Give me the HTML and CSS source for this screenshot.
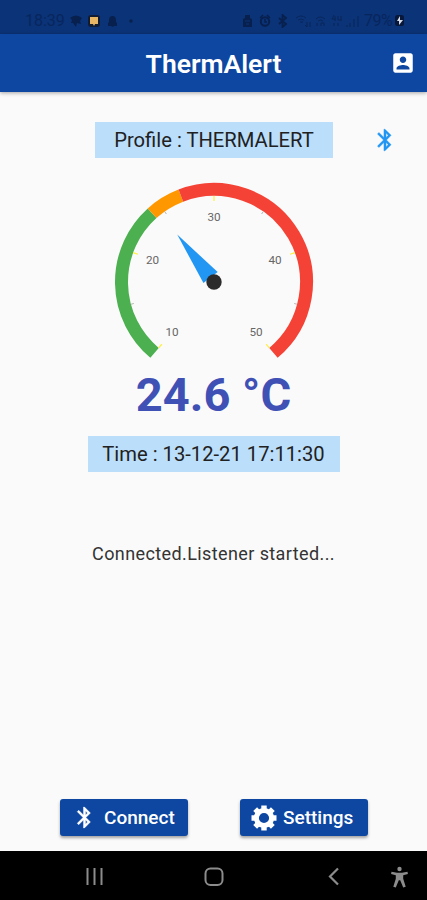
FILE: index.html
```
<!DOCTYPE html>
<html lang="en">
<head>
  <meta charset="UTF-8">
  <meta name="viewport" content="width=device-width, initial-scale=1.0">
  <title>ThermAlert</title>
  <link rel="stylesheet" href="styles.css">
</head>
<body>
  <div class="status-bar">
    <span class="clock">18:39</span>
    <svg class="status-left" width="66" height="14" viewBox="0 0 66 14">
      <path d="M1 4Q7-1 13 4L11 7 12 10 8 9 7 13 4 9 2 9 3 6Z" fill="#08204e"/>
      <rect x="19" y="1" width="12" height="12" rx="3" fill="#101c33"/>
      <path d="M21 3h8v7h-3l-1 2-1-2h-3z" fill="#e8b765"/>
      <path d="M39 12V9l1-1V6q0-4 3.500-4T47 6v2l1 1v3zM42 12h3l-1 1z" fill="#08204e"/>
      <circle cx="62" cy="7" r="1.700" fill="#08204e"/>
    </svg>
    <svg class="status-right" width="118" height="14" viewBox="0 0 118 14">
      <path d="M1 13V5l2-1V1h5v3l2 1v8z" fill="#08204e"/>
      <path d="M3 7h5M4 10h3" stroke="#0b3377"/>
      <circle cx="23" cy="7.500" r="4.200" fill="none" stroke="#08204e" stroke-width="2"/>
      <path d="M18 4l3-3M25 1l3 3M23 5v3h2" fill="none" stroke="#08204e" stroke-width="1.500"/>
      <path d="M37 4l7 6-3.500 3V1L44 4l-7 6" fill="none" stroke="#08204e" stroke-width="1.800"/>
      <path d="M54 4q5-4 10 0M56 6q3-2 6 0M58 8h3M65 8v5M63 11l2 2M68 13V8M74 5q4-4 9 0M76 7q3-2 5 0M75 12V9M79 12V9h3v3" fill="none" stroke="#08265d"/>
      <path d="M92 1l-2 4h4M93 2v5M96 2v4h4M99 2v5M92 12V9M96 9v3M105 13v-2M108 13v-4M112 13V5M116 13V2" fill="none" stroke="#08265d"/>
    </svg>
    <span class="battery-text">79%</span>
    <svg width="9" height="13" viewBox="0 0 9 13">
      <rect y="1" width="9" height="11" rx="2.500" fill="#07183a"/>
      <path d="M5 2L2 7h2v4l4-5H5z" fill="#d5dbe6"/>
    </svg>
  </div>

  <div class="app-bar">
    <h1>ThermAlert</h1>
    <svg class="account" width="26" height="26" viewBox="0 0 24 24">
      <path fill="#fff" d="M3 5v14c0 1.100.89 2 2 2h14c1.100 0 2-.9 2-2V5c0-1.100-.9-2-2-2H5c-1.110 0-2 .9-2 2zm12 4c0 1.660-1.340 3-3 3s-3-1.340-3-3 1.340-3 3-3 3 1.340 3 3zm-9 8c0-2 4-3.100 6-3.100s6 1.100 6 3.100v1H6v-1z"/>
    </svg>
  </div>

  <div class="content">
    <div class="profile-row">
      <div class="label profile">Profile : THERMALERT</div>
      <svg class="bt-status" width="26" height="26" viewBox="0 0 24 24">
        <path fill="#2196f3" stroke="#2196f3" stroke-width=".3" d="M17.710 7.710L12 2h-1v7.590L6.410 5 5 6.410 10.590 12 5 17.590 6.410 19 11 14.410V22h1l5.710-5.710-4.300-4.290 4.300-4.290zM13 5.830l1.880 1.880L13 9.590V5.830zm1.880 10.460L13 18.170v-3.760l1.880 1.880z"/>
      </svg>
    </div>

    <svg class="gauge" width="200" height="180" viewBox="-100 -100 200 180">
      <!-- ranges: 10-24, 24-27, 27-50 -->
      <g fill="none" stroke-width="13">
        <path d="M-59.460 70.860A92.500 92.500 0 0 1-61.890-68.740" stroke="#4caf50"/>
        <path d="M-61.890-68.740A92.500 92.500 0 0 1-33.150-86.360" stroke="#ff9800"/>
        <path d="M-33.150-86.360A92.500 92.500 0 0 1 59.460 70.860" stroke="#f44336"/>
      </g>
      <g stroke="#ffee3b" stroke-width="1.200">
        <path d="M0-86v5" transform="rotate(-140)"/>
        <path d="M0-86v5" transform="rotate(-70)"/>
        <path d="M0-86v5"/>
        <path d="M0-86v5" transform="rotate(70)"/>
        <path d="M0-86v5" transform="rotate(140)"/>
      </g>
      <g stroke="#aaa" stroke-width=".8">
        <path d="M0-86v3" transform="rotate(-105)"/>
        <path d="M0-86v3" transform="rotate(-35)"/>
        <path d="M0-86v3" transform="rotate(35)"/>
        <path d="M0-86v3" transform="rotate(105)"/>
      </g>
      <g class="ticks">
        <text x="-42" y="54">10</text>
        <text x="-61.500" y="-18.500">20</text>
        <text x="0" y="-61">30</text>
        <text x="61" y="-18.500">40</text>
        <text x="42" y="54">50</text>
      </g>
      <path d="M0-60L9-5.600H-9z" fill="#2196f3" transform="rotate(-37.800)"/>
      <circle r="7.700" fill="#2b2b2b"/>
    </svg>

    <div class="temperature">24.6 °C</div>
    <div class="label time">Time : 13-12-21 17:11:30</div>
    <div class="message">Connected.Listener started...</div>

    <div class="actions">
      <button class="connect">
        <svg width="25" height="25" viewBox="0 0 24 24">
          <path fill="#fff" stroke="#fff" stroke-width=".4" d="M17.710 7.710L12 2h-1v7.590L6.410 5 5 6.410 10.590 12 5 17.590 6.410 19 11 14.410V22h1l5.710-5.710-4.300-4.290 4.300-4.290zM13 5.830l1.880 1.880L13 9.590V5.830zm1.880 10.460L13 18.170v-3.760l1.880 1.880z"/>
        </svg>
        <span>Connect</span>
      </button>
      <button class="settings">
        <svg width="26" height="26" viewBox="-13 -13 26 26">
          <circle r="7.600" fill="none" stroke="#fff" stroke-width="5"/>
          <g stroke="#fff" stroke-width="5.400">
            <path d="M0-12.500V-8M0 12.500V8M-12.500 0H-8M12.500 0H8"/>
            <path d="M0-12.500V-8M0 12.500V8M-12.500 0H-8M12.500 0H8" transform="rotate(45)"/>
          </g>
        </svg>
        <span>Settings</span>
      </button>
    </div>
  </div>

  <div class="nav-bar">
    <svg width="427" height="49" viewBox="0 0 427 49" fill="none" stroke="#8c8c8c" stroke-width="2">
      <path d="M87.500 17v17M94.500 17v17M101.500 17v17"/>
      <rect x="205.500" y="17.500" width="17" height="16.500" rx="5"/>
      <path d="M338 17.500L330 25.500l8 8" stroke-width="2.200"/>
      <circle cx="399.500" cy="18" r="2.200" fill="#8c8c8c" stroke="none"/>
      <path fill="#8c8c8c" stroke="none" d="M391.500 20.800l5.500.9h5l5.500-.9.400 2.200-4.700 1.200v3.500l2.500 8-2.500.8-3-7.200h-1.400l-3 7.200-2.500-.8 2.500-8v-3.500l-4.700-1.200z"/>
    </svg>
  </div>
</body>
</html>
```
FILE: styles.css
```
* {
  box-sizing: border-box;
}

body {
  width: 427px;
  height: 900px;
  margin: 0;
  display: flex;
  flex-direction: column;
  overflow: hidden;
  font-family: Roboto, "Liberation Sans", sans-serif;
  background: #fafafa;
}

.status-bar {
  height: 34px;
  padding: 7px 23px 0 25px;
  display: flex;
  align-items: center;
  background: #0b3377;
  color: #08265d;
  font-size: 16px;
}

.clock {
  width: 38px;
}

.status-left {
  margin-left: 6px;
}

.status-right {
  margin-left: auto;
}

.battery-text {
  margin-left: 4px;
  width: 31px;
  letter-spacing: -0.5px;
}

.app-bar {
  height: 58px;
  display: flex;
  align-items: center;
  justify-content: flex-end;
  padding-right: 11px;
  background: #0d47a1;
  box-shadow: 0 1px 4px rgba(0, 0, 0, 0.35);
}

h1 {
  flex: 1;
  margin: 0;
  padding: 1px 0 0 37px;
  text-align: center;
  font-size: 26.5px;
  font-weight: 600;
  color: #fff;
}

.content {
  flex: 1;
  display: flex;
  flex-direction: column;
  align-items: center;
  padding-top: 30px;
}

.profile-row {
  width: 100%;
  display: flex;
  align-items: center;
  padding-left: 95px;
}

.label {
  height: 36px;
  line-height: 36px;
  text-align: center;
  font-size: 20.2px;
  color: #212121;
  background: #bbdefb;
  white-space: nowrap;
}

.profile {
  width: 238px;
}

.bt-status {
  margin-left: 39px;
}

.gauge {
  margin: 24px 0 0 1px;
}

.ticks {
  font-size: 11.7px;
  fill: #666;
  text-anchor: middle;
}

.temperature {
  margin-top: 5px;
  height: 56px;
  line-height: 56px;
  font-size: 47px;
  font-weight: 700;
  color: #3f51b5;
}

.time {
  width: 252px;
  margin-top: 13px;
}

.message {
  margin-top: 70px;
  line-height: 24px;
  font-size: 18px;
  letter-spacing: 0.4px;
  color: #333;
}

.actions {
  width: 100%;
  display: flex;
  gap: 52px;
  margin-top: auto;
  padding: 0 0 15px 60px;
}

button {
  width: 128px;
  height: 37px;
  padding: 0 0 0 11px;
  display: flex;
  align-items: center;
  border: none;
  border-radius: 3px;
  background: #0d47a1;
  box-shadow: 0 2px 3px rgba(0, 0, 0, 0.35);
  color: #fff;
  font-family: inherit;
  font-size: 19px;
  font-weight: 500;
}

.connect {
  padding-left: 12px;
}

.connect span {
  margin-left: 7px;
}

.settings span {
  margin-left: 6px;
}

.nav-bar {
  height: 49px;
  background: #000;
}
```
